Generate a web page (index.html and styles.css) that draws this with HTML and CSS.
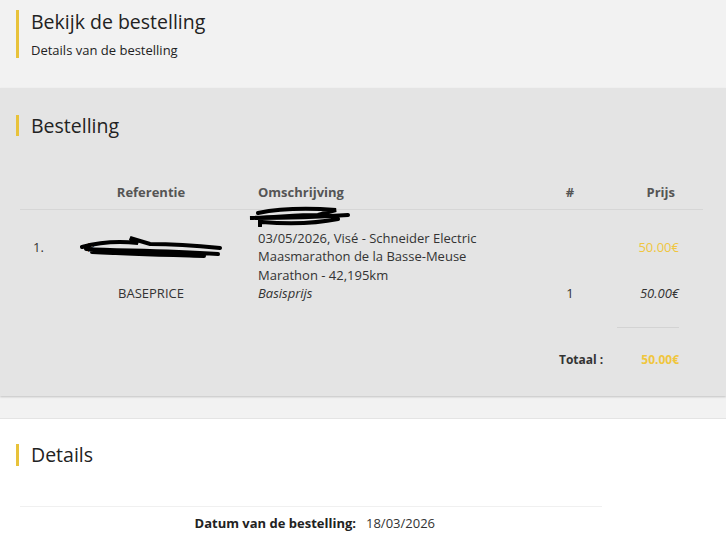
FILE: index.html
```html
<!DOCTYPE html>
<html lang="nl">
<head>
    <meta charset="UTF-8">
    <meta name="viewport" content="width=device-width, initial-scale=1.0">
    <title>Bekijk de bestelling</title>
    <link rel="stylesheet" href="styles.css">
</head>
<body>
    <header class="page-header">
        <div class="title-block">
            <h1>Bekijk de bestelling</h1>
            <p>Details van de bestelling</p>
        </div>
    </header>

    <section class="panel">
        <h2 class="section-title">Bestelling</h2>

        <table class="order-table">
            <colgroup>
                <col class="col-num">
                <col class="col-ref">
                <col class="col-desc">
                <col class="col-qty">
                <col class="col-price">
            </colgroup>
            <thead>
                <tr>
                    <th></th>
                    <th class="center">Referentie</th>
                    <th class="desc">Omschrijving</th>
                    <th class="center">#</th>
                    <th class="price">Prijs</th>
                </tr>
            </thead>
            <tbody>
                <tr class="item">
                    <td class="num">1.</td>
                    <td class="ref">
                        <span class="redacted">R
                            <svg class="scribble scribble-ref" viewBox="0 0 142 24" aria-hidden="true">
                                <path d="M2 12 C20 7 40 6 58 8 L50 3 L70 9 C90 9 110 10 140 13 M6 14 C40 16 80 15 138 19 M12 17 C50 19 90 20 124 21" fill="none" stroke="#000" stroke-width="4" stroke-linecap="round"/>
                            </svg>
                        </span>
                    </td>
                    <td class="desc">
                        <div class="desc-name">
                            <svg class="scribble scribble-name" viewBox="0 0 102 22" aria-hidden="true">
                                <path d="M10 8 C30 4 60 3 88 5 L70 10 C50 10 30 12 2 13 C30 13 70 12 100 10 M14 17 C40 19 70 18 90 14 M12 13 L12 21" fill="none" stroke="#000" stroke-width="4" stroke-linecap="round"/>
                            </svg>
                        </div>
                        03/05/2026, Visé - Schneider Electric<br>
                        Maasmarathon de la Basse-Meuse<br>
                        Marathon - 42,195km
                    </td>
                    <td class="center"></td>
                    <td class="price accent">50.00€</td>
                </tr>
                <tr class="sub">
                    <td></td>
                    <td class="center">BASEPRICE</td>
                    <td class="desc"><em>Basisprijs</em></td>
                    <td class="center">1</td>
                    <td class="price"><em>50.00€</em></td>
                </tr>
            </tbody>
        </table>

        <div class="totals">
            <div class="totals-rule"></div>
            <div class="totals-row">
                <span class="totals-label">Totaal :</span>
                <span class="totals-value">50.00€</span>
            </div>
        </div>
    </section>

    <div class="spacer"></div>

    <section class="details">
        <h2 class="section-title">Details</h2>
        <div class="details-list">
            <div class="details-row">
                <span class="details-label">Datum van de bestelling:</span>
                <span class="details-value">18/03/2026</span>
            </div>
        </div>
    </section>
</body>
</html>
```

FILE: styles.css
```css
body {
    margin: 0;
    font-family: 'Open Sans', sans-serif;
    color: #333;
    background-color: #fff;
}

.page-header {
    background-color: #f2f2f2;
    padding: 10px 16px 30px;
}

.title-block {
    border-left: 3px solid #e8c23a;
    padding-left: 12px;
}

.title-block h1 {
    margin: 0;
    font-size: 19.5px;
    font-weight: 400;
    line-height: 24px;
    color: #222;
}

.title-block p {
    margin: 8px 0 0;
    font-size: 13px;
    line-height: 16px;
    color: #222;
}

.section-title {
    margin: 0;
    border-left: 3px solid #e8c23a;
    padding-left: 12px;
    font-size: 19.5px;
    font-weight: 400;
    line-height: 21px;
    color: #222;
}

/* Order panel */
.panel {
    background-color: #e4e4e4;
    padding: 27px 16px 27px;
    box-shadow: 0 1px 2px rgba(0, 0, 0, 0.2);
    position: relative;
}

.order-table {
    margin: 47px 7px 0 4px;
    width: 683px;
    border-collapse: collapse;
    table-layout: fixed;
    font-size: 13px;
}

.col-num { width: 60px; }
.col-ref { width: 142px; }
.col-desc { width: 318px; }
.col-qty { width: 60px; }
.col-price { width: 103px; }

.order-table th {
    padding: 0 0 8px;
    line-height: 18px;
    font-weight: 700;
    color: #555;
    border-bottom: 1px solid #d6d6d6;
}

.order-table td {
    padding: 0;
    line-height: 18.5px;
    vertical-align: middle;
}

.center {
    text-align: center;
}

.order-table .desc {
    text-align: left;
    padding-left: 36px;
}

.order-table .price {
    text-align: right;
    padding-right: 24px;
}

.order-table th.price {
    padding-right: 28px;
}

.order-table .num {
    padding-left: 13px;
}

.order-table .ref {
    padding-left: 7px;
}

.redacted {
    position: relative;
    display: inline-block;
}

.accent {
    color: #f0c63e;
}

.desc-name {
    height: 18.5px;
    position: relative;
}

.scribble {
    position: absolute;
}

.scribble-name {
    left: -10px;
    top: -5px;
    width: 102px;
    height: 22px;
}

.scribble-ref {
    left: -7px;
    top: -3px;
    width: 142px;
    height: 24px;
}

.order-table tr.sub td {
    line-height: 18px;
}

.totals {
    margin: 25px 31px 0 0;
}

.totals-rule {
    width: 62px;
    margin-left: auto;
    border-top: 1px solid #d3d3d3;
}

.totals-row {
    display: flex;
    justify-content: flex-end;
    align-items: center;
    gap: 38px;
    margin-top: 23px;
    font-size: 12px;
    font-weight: 700;
    line-height: 18px;
}

.totals-value {
    color: #f0c63e;
}

.spacer {
    height: 22px;
    background-color: #f2f2f2;
    border-bottom: 1px solid #e4e4e4;
}

/* Details */
.details {
    padding: 25px 16px 20px;
}

.details .section-title {
    line-height: 22px;
}

.details-list {
    margin: 40px 0 0 4px;
    width: 582px;
    border-top: 1px solid #f0f0f0;
}

.details-row {
    display: grid;
    grid-template-columns: 336px auto;
    gap: 10px;
    padding-top: 7px;
    font-size: 13px;
    line-height: 18px;
}

.details-label {
    text-align: right;
    font-weight: 700;
    color: #222;
}

.details-value {
    color: #333;
}
```
